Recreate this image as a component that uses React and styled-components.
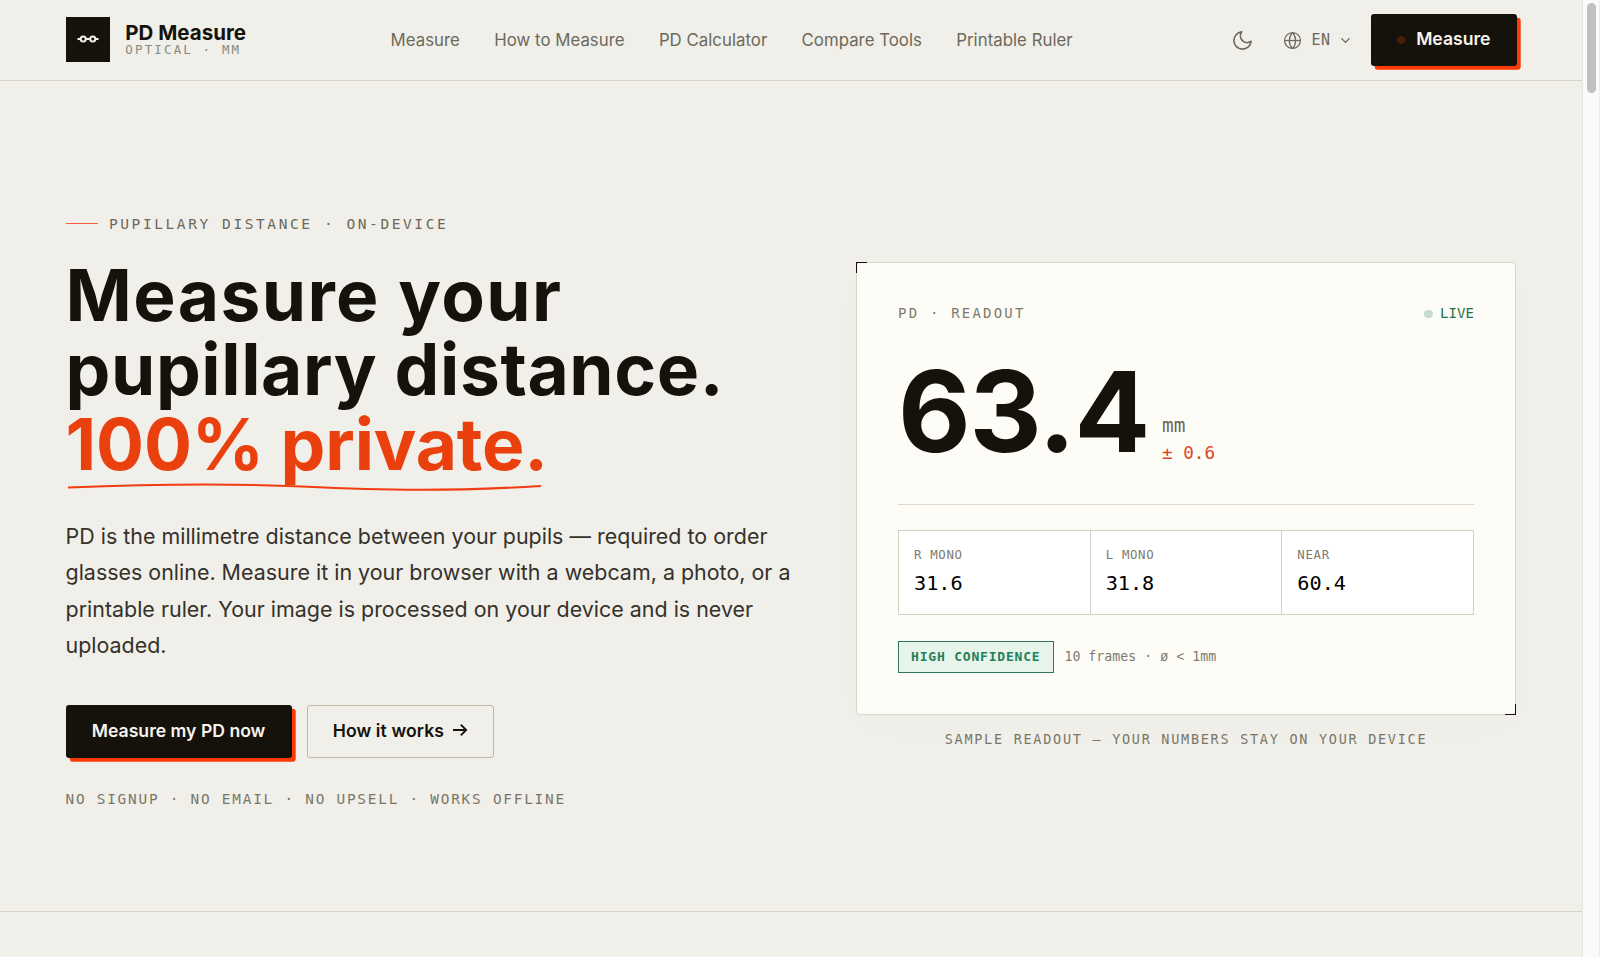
import styled, { createGlobalStyle, css } from "styled-components"


const GlobalStyle = createGlobalStyle`
	* {
		box-sizing: border-box;
	}
	body {
		margin: 0;
		background-color: #f0efe9;
		color: #15120c;
		font-family: Inter, "Liberation Sans", sans-serif;
		overflow: hidden;
	}
	h1, p {
		margin: 0;
	}
`

const mono = css`
	font-family: "DejaVu Sans Mono", "Liberation Mono", monospace;
`

const Shell = styled.div`
	display: flex;
	height: 957px;
`

const Page = styled.div`
	flex: 1;
	min-width: 0;
`

const Scrollbar = styled.div`
	width: 18.5px;
	padding: 3px 3px 0 4px;
	background-color: #fafafa;
	border-left: 1px solid #e6e6e3;
	border-right: 1px solid #ececec;
`

const Thumb = styled.div`
	height: 90px;
	border-radius: 5px;
	background-color: #c0c0c0;
`

const Header = styled.header`
	display: flex;
	align-items: center;
	height: 81px;
	padding: 0 65px 0 65.5px;
	border-bottom: 1px solid #d6d4c8;
`

const Brand = styled.div`
	display: flex;
	align-items: center;
	gap: 15px;
	width: 180.5px;
	margin-bottom: 2px;
`

const LogoBox = styled.div`
	display: flex;
	align-items: center;
	justify-content: center;
	width: 45px;
	height: 45px;
	background-color: #15120c;
`

const BrandName = styled.div`
	font-size: 20.5px;
	font-weight: 700;
	line-height: 21px;
	white-space: nowrap;
`

const BrandSub = styled.div`
	${mono}
	font-size: 12.4px;
	line-height: 13.5px;
	letter-spacing: 2.2px;
	color: #8b897c;
	white-space: nowrap;
`

const Nav = styled.nav`
	display: flex;
	gap: 34.3px;
	margin-left: 144.6px;
`

const NavLink = styled.a`
	font-size: 16.8px;
	letter-spacing: 0.03px;
	color: #6c695b;
	white-space: nowrap;
`

const Actions = styled.div`
	display: flex;
	align-items: center;
	margin-left: auto;
	color: #6c695b;
`

const Language = styled.div`
	${mono}
	display: flex;
	align-items: center;
	margin: 0 18.5px 0 29px;
	font-size: 15px;
	letter-spacing: 0.6px;

	span {
		margin: 0 7px 0 9px;
	}
`

const Button = styled.button`
	display: flex;
	align-items: center;
	height: 52.5px;
	padding: 0 26px 3px;
	border: none;
	border-radius: 3px;
	background-color: #15120c;
	box-shadow: 3.7px 3.7px 0 #fb3a06;
	color: #f5f4ee;
	font-family: inherit;
	font-size: 17.6px;
	font-weight: 600;
	white-space: nowrap;
`

const WideButton = styled(Button)`
	padding: 0 26.3px 3px;
`

const GhostButton = styled(Button)`
	gap: 7.5px;
	padding: 0 25px 3px;
	border: 1px solid #bdbaa6;
	background-color: transparent;
	box-shadow: none;
	color: #15120c;
	letter-spacing: 0.1px;
`

const ButtonDot = styled.span`
	width: 8px;
	height: 8px;
	margin: 3px 11px 0 0;
	border-radius: 50%;
	background-color: #4c1b04;
`

const Hero = styled.section`
	display: grid;
	grid-template-columns: 740px 660px;
	justify-content: space-between;
	align-items: start;
	height: 831px;
	padding: 131.5px 65.5px 0 65.5px;
	border-bottom: 1px solid #d6d4c8;
`

const Eyebrow = styled.p`
	${mono}
	display: flex;
	align-items: center;
	gap: 11px;
	font-size: 14.5px;
	line-height: 22px;
	letter-spacing: 2.58px;
	color: #6c695b;

	&::before {
		content: '';
		width: 32.5px;
		height: 1px;
		margin-bottom: 1px;
		background-color: #fb5c3c;
	}
`

const Title = styled.h1`
	margin-top: 23px;
	font-size: 71.2px;
	font-weight: 700;
	line-height: 74.5px;
`

const TitleLine = styled.span`
	display: block;
	width: fit-content;
	letter-spacing: ${p => p.$spacing}px;
	white-space: nowrap;
`

const Accent = styled(TitleLine)`
	position: relative;
	color: #ea400d;
`

const Underline = styled.svg`
	position: absolute;
	left: 1.5px;
	top: 75px;
`

const Lead = styled.p`
	width: 735px;
	margin-top: 36.5px;
	font-size: 21.45px;
	line-height: 36.6px;
	color: #35322a;
`

const ButtonRow = styled.div`
	display: flex;
	gap: 15px;
	margin-top: 41.4px;
`

const Promise = styled.p`
	${mono}
	margin-top: 31px;
	font-size: 14.4px;
	line-height: 20px;
	letter-spacing: 1.76px;
	color: #7a7768;
	white-space: nowrap;
`

const Readout = styled.div`
	padding-top: 49px;
`

const Card = styled.div`
	position: relative;
	height: 453px;
	padding: 40px 41px 0;
	border: 1px solid #d9d8cd;
	border-radius: 4px;
	background-color: #fdfcf7;
	box-shadow: 0 12px 48px rgba(21, 18, 12, 0.01);
`

const Corner = styled.span`
	position: absolute;
	width: 11px;
	height: 11px;
	${p => p.$end
		? 'right: -1px; bottom: -1px; border-right: 1px solid #15120c; border-bottom: 1px solid #15120c;'
		: 'left: -1px; top: -1px; border-left: 1px solid #15120c; border-top: 1px solid #15120c;'}
`

const CardHead = styled.div`
	${mono}
	display: flex;
	justify-content: space-between;
	font-size: 14px;
	line-height: 20px;
	letter-spacing: 2.2px;
	color: #7d7a6d;
`

const Live = styled.span`
	display: flex;
	align-items: center;
	gap: 7px;
	letter-spacing: 0.1px;
	color: #1f7350;

	&::before {
		content: '';
		width: 8.5px;
		height: 8.5px;
		margin-top: 3px;
		border-radius: 50%;
		background-color: #c4ddd0;
	}
`

const Reading = styled.div`
	display: flex;
	align-items: flex-end;
	gap: 13px;
	margin-top: 32px;
	padding-bottom: 37.3px;
	border-bottom: 1px solid #dad8ce;
`

const BigNumber = styled.span`
	font-size: 112px;
	font-weight: 700;
	line-height: 112px;
	letter-spacing: -1.2px;
`

const Unit = styled.span`
	${mono}
	display: block;
	font-size: 19.4px;
	line-height: 28px;
	color: #6c695b;
`

const Tolerance = styled(Unit)`
	font-size: 17.6px;
	line-height: 27px;
	color: #d9482a;
`

const Stats = styled.div`
	display: grid;
	grid-template-columns: repeat(3, 1fr);
	gap: 1px;
	height: 85.5px;
	margin-top: 25px;
	border: 1px solid #d3d1c4;
	background-color: #d3d1c4;
`

const Stat = styled.div`
	${mono}
	padding: 16px 15px 0;
	background-color: #fff;
`

const StatLabel = styled.div`
	font-size: 12.4px;
	line-height: 16px;
	letter-spacing: 0.65px;
	color: #7d7a6d;
`

const StatValue = styled.div`
	margin-top: 7px;
	font-size: 20.2px;
	line-height: 26px;
	color: #000;
`

const Quality = styled.div`
	${mono}
	display: flex;
	align-items: center;
	gap: 10px;
	margin-top: 25.5px;
	font-size: 13.2px;
	letter-spacing: 0.05px;
	color: #7d7a6d;
`

const Badge = styled.span`
	padding: 0 13px 0 12px;
	border: 1px solid #2c7556;
	background-color: #e7f4ea;
	color: #23805a;
	font-size: 13px;
	font-weight: 700;
	line-height: 30px;
	letter-spacing: 0.8px;
`

const Caption = styled.p`
	${mono}
	margin-top: 15px;
	font-size: 13.5px;
	line-height: 18px;
	letter-spacing: 1.72px;
	text-align: center;
	color: #7a7768;
	white-space: nowrap;
`

const links = ['Measure', 'How to Measure', 'PD Calculator', 'Compare Tools', 'Printable Ruler']

const stats = [
	{ label: 'R MONO', value: '31.6' },
	{ label: 'L MONO', value: '31.8' },
	{ label: 'NEAR', value: '60.4' },
]

const Logo = () => (
	<svg width="22" height="10" viewBox="0 0 22 10" fill="none" stroke="#f0efe9" strokeWidth="2">
		<path d="M1.2 5H3.6M8.8 5H13.2M18.4 5H20.8" strokeLinecap="round" />
		<circle cx="6.2" cy="5" r="2.6" />
		<circle cx="15.8" cy="5" r="2.6" />
	</svg>
)

const MoonIcon = () => (
	<svg width="23" height="23" viewBox="0 0 24 24" fill="none" stroke="currentColor" strokeWidth="1.7" strokeLinejoin="round">
		<path d="M21 12.79A9 9 0 1 1 11.21 3 7 7 0 0 0 21 12.79z" />
	</svg>
)

const GlobeIcon = () => (
	<svg width="19" height="19" viewBox="0 0 24 24" fill="none" stroke="currentColor" strokeWidth="1.6">
		<circle cx="12" cy="12" r="10" />
		<path d="M12 2a14.5 14.5 0 0 0 0 20 14.5 14.5 0 0 0 0-20" />
		<path d="M2 12h20" />
	</svg>
)

const ChevronIcon = () => (
	<svg width="15" height="15" viewBox="0 0 24 24" fill="none" stroke="currentColor" strokeWidth="2.2" strokeLinecap="round" strokeLinejoin="round">
		<path d="M6 9l6 6 6-6" />
	</svg>
)

const ArrowIcon = () => (
	<svg width="16" height="14" viewBox="0 0 16 14" fill="none" stroke="currentColor" strokeWidth="1.8">
		<path d="M1 7H14M8.8 1.6L14.2 7L8.8 12.4" />
	</svg>
)

const App = () => {
	return (
		<Shell>
			<GlobalStyle />
			<Page>
				<Header>
					<Brand>
						<LogoBox><Logo /></LogoBox>
						<div>
							<BrandName>PD Measure</BrandName>
							<BrandSub>OPTICAL · MM</BrandSub>
						</div>
					</Brand>
					<Nav>
						{links.map(link => <NavLink key={link}>{link}</NavLink>)}
					</Nav>
					<Actions>
						<MoonIcon />
						<Language>
							<GlobeIcon />
							<span>EN</span>
							<ChevronIcon />
						</Language>
						<Button><ButtonDot />Measure</Button>
					</Actions>
				</Header>
				<Hero>
					<div>
						<Eyebrow>PUPILLARY DISTANCE · ON-DEVICE</Eyebrow>
						<Title>
							<TitleLine $spacing={1.4}>Measure your</TitleLine>
							<TitleLine $spacing={0.6}>pupillary distance.</TitleLine>
							<Accent $spacing={-0.15}>
								100% private.
								<Underline width="476" height="12" viewBox="0 0 476 12" fill="none" stroke="#f23c12" strokeWidth="2">
									<path d="M1 5.5C60 3 150 0.5 235 4.5S380 9.5 474 4" />
								</Underline>
							</Accent>
						</Title>
						<Lead>
							PD is the millimetre distance between your pupils — required to order glasses online. Measure it in your browser with a webcam, a photo, or a printable ruler. Your image is processed on your device and is never uploaded.
						</Lead>
						<ButtonRow>
							<WideButton>Measure my PD now</WideButton>
							<GhostButton>How it works <ArrowIcon /></GhostButton>
						</ButtonRow>
						<Promise>NO SIGNUP · NO EMAIL · NO UPSELL · WORKS OFFLINE</Promise>
					</div>
					<Readout>
						<Card>
							<Corner />
							<Corner $end />
							<CardHead>
								<span>PD · READOUT</span>
								<Live>LIVE</Live>
							</CardHead>
							<Reading>
								<BigNumber>63.4</BigNumber>
								<div>
									<Unit>mm</Unit>
									<Tolerance>± 0.6</Tolerance>
								</div>
							</Reading>
							<Stats>
								{stats.map(stat => (
									<Stat key={stat.label}>
										<StatLabel>{stat.label}</StatLabel>
										<StatValue>{stat.value}</StatValue>
									</Stat>
								))}
							</Stats>
							<Quality>
								<Badge>HIGH CONFIDENCE</Badge>
								<span>{'10 frames · ø < 1mm'}</span>
							</Quality>
						</Card>
						<Caption>SAMPLE READOUT — YOUR NUMBERS STAY ON YOUR DEVICE</Caption>
					</Readout>
				</Hero>
			</Page>
			<Scrollbar><Thumb /></Scrollbar>
		</Shell>
	)
}

export default App
